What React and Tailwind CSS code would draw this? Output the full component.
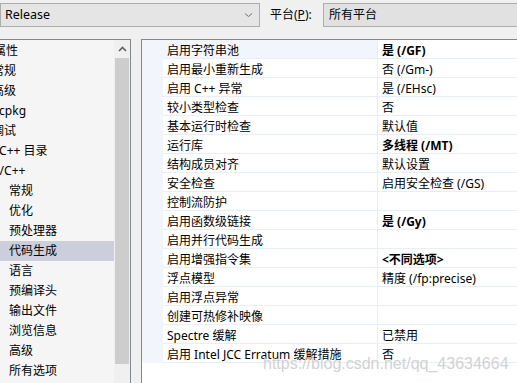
import React from 'react';

const treeItems = [
  { label: '配置属性', pad: 'pl-0 -ml-[30px]' },
  { label: '常规', pad: 'pl-0 -ml-[8px]' },
  { label: '高级', pad: 'pl-0 -ml-[8px]' },
  { label: 'vcpkg', pad: 'pl-0 -ml-[7px]' },
  { label: '调试', pad: 'pl-0 -ml-[8px]' },
  { label: 'VC++ 目录', pad: 'pl-0 -ml-[8px]' },
  { label: 'C/C++', pad: 'pl-0 -ml-[8px]' },
  { label: '常规', pad: 'pl-[9px]' },
  { label: '优化', pad: 'pl-[9px]' },
  { label: '预处理器', pad: 'pl-[9px]' },
  { label: '代码生成', pad: 'pl-[9px]', selected: true },
  { label: '语言', pad: 'pl-[9px]' },
  { label: '预编译头', pad: 'pl-[9px]' },
  { label: '输出文件', pad: 'pl-[9px]' },
  { label: '浏览信息', pad: 'pl-[9px]' },
  { label: '高级', pad: 'pl-[9px]' },
  { label: '所有选项', pad: 'pl-[9px]' },
];

const props = [
  ['启用字符串池', '是 (/GF)', true],
  ['启用最小重新生成', '否 (/Gm-)'],
  ['启用 C++ 异常', '是 (/EHsc)'],
  ['较小类型检查', '否'],
  ['基本运行时检查', '默认值'],
  ['运行库', '多线程 (/MT)', true],
  ['结构成员对齐', '默认设置'],
  ['安全检查', '启用安全检查 (/GS)'],
  ['控制流防护', ''],
  ['启用函数级链接', '是 (/Gy)', true],
  ['启用并行代码生成', ''],
  ['启用增强指令集', '<不同选项>', true],
  ['浮点模型', '精度 (/fp:precise)'],
  ['启用浮点异常', ''],
  ['创建可热修补映像', ''],
  ['Spectre 缓解', '已禁用'],
  ['启用 Intel JCC Erratum 缓解措施', '否'],
];

function Chevron({ up }) {
  return (
    <svg width="9" height="6" viewBox="0 0 9 6" className="block">
      {up ? (
        <path d="M1 5 L4.5 1.5 L8 5" fill="none" stroke="#606060" strokeWidth="1.6" />
      ) : (
        <path d="M1 1.5 L4.5 4.5 L8 1.5" fill="none" stroke="#707070" strokeWidth="1" />
      )}
    </svg>
  );
}

export default function App() {
  return (
    <div className="w-[517px] h-[383px] bg-[#f0f0f0] overflow-hidden relative text-[12px] text-black font-['Noto_Sans','Noto_Sans_CJK_SC',sans-serif]">
      <div className="flex items-center h-[24px] mt-[3px]">
        <div className="w-[260px] h-[24px] bg-[#e5e5e5] border border-[#adadad] flex items-center justify-between pl-[4px] pr-[6px]">
          <span className="text-[12.5px] leading-none">Release</span>
          <Chevron />
        </div>
        <div className="ml-[10px] w-[53px] leading-none">
          平台(<span className="underline">P</span>):
        </div>
        <div className="flex-1 h-[24px] bg-[#e1e1e1] border border-[#adadad] border-r-0 flex items-center pl-[5px] leading-none">
          所有平台
        </div>
      </div>

      <div className="flex mt-[12px] h-[344px]">
        <div className="w-[131px] border-t border-r border-[#828790] bg-[#f5f5f5] flex">
          <div className="flex-1 overflow-hidden pt-[1px]">
            {treeItems.map((it, i) => (
              <div
                key={i}
                className={`h-[20px] flex items-center whitespace-nowrap ${it.selected ? 'bg-[#cccedb]' : ''}`}
              >
                <span className={`${it.pad} leading-none`}>{it.label}</span>
              </div>
            ))}
          </div>
          <div className="w-[16px] bg-[#f0f0f0] flex flex-col">
            <div className="h-[18px] flex items-center justify-center">
              <Chevron up />
            </div>
            <div className="h-[306px] mx-[1px] bg-[#cdcdcd]" />
          </div>
        </div>

        <div className="w-[10px]" />

        <div className="flex-1 border-t border-l border-[#828790] bg-white flex flex-col">
          {props.map(([label, value, bold], i) => (
            <div key={i} className="flex h-[19px] shrink-0">
              <div className="w-[21px] bg-[#f2f5fb]" />
              <div
                className={`w-[214px] flex items-center pl-[4px] pt-[3px] whitespace-nowrap border-b border-[#e9eef6] ${i === 0 ? 'bg-[#f2f5fb]' : ''}`}
              >
                <span className="leading-none">{label}</span>
              </div>
              <div className="flex-1 flex items-center pl-[4px] pt-[3px] whitespace-nowrap border-b border-l border-[#e9eef6]">
                <span className={`leading-none ${bold ? 'font-bold' : ''}`}>{value}</span>
              </div>
            </div>
          ))}
        </div>
      </div>

      <div className="absolute left-[263px] top-[355px] text-[16px] leading-[18px] text-[#d2d2d2] font-['Liberation_Sans',sans-serif] whitespace-nowrap">
        https://blog.csdn.net/qq_43634664
      </div>
    </div>
  );
}
